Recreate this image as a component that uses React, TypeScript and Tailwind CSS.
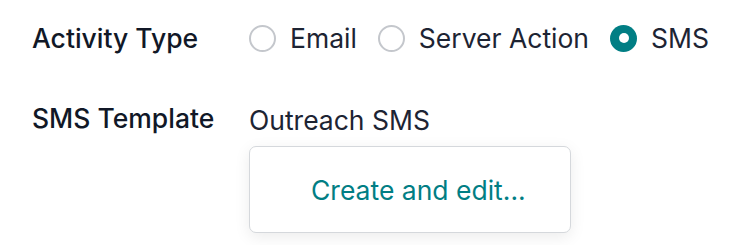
import React from "react";

const options = ["Email", "Server Action", "SMS"];

function Radio({ checked }: { checked: boolean }) {
  return checked ? (
    <span className="flex h-[27px] w-[27px] items-center justify-center rounded-full bg-[#017e84]">
      <span className="h-[10px] w-[10px] rounded-full bg-white" />
    </span>
  ) : (
    <span className="h-[27px] w-[27px] rounded-full border-2 border-[#c4c7cc] bg-white" />
  );
}

export default function App() {
  return (
    <div
      className="h-[245px] w-[750px] bg-white text-[26.5px] leading-[32px] text-[#1d2433]"
      style={{ fontFamily: "Inter, 'Noto Sans', sans-serif" }}
    >
      <div className="flex items-center pl-[32px] pt-[22px]">
        <div className="w-[217px] font-medium text-[#111827]">Activity Type</div>
        <div className="flex items-center">
          {options.map((o) => (
            <label key={o} className="mr-[21px] flex items-center gap-[14px]">
              <Radio checked={o === "SMS"} />
              <span>{o}</span>
            </label>
          ))}
        </div>
      </div>

      <div className="mt-[48px] flex pl-[32px]">
        <div className="w-[217px] font-medium text-[#111827]">SMS Template</div>
        <div className="flex flex-col">
          <div className="pt-[2px]">Outreach SMS</div>
          <div className="mt-[10px] flex h-[87px] w-[322px] items-center rounded-[7px] border border-[#d5d8dc] bg-white pl-[61px] text-[#017e84] shadow-[0_4px_16px_rgba(0,0,0,0.08)]">
            Create and edit...
          </div>
        </div>
      </div>
    </div>
  );
}
